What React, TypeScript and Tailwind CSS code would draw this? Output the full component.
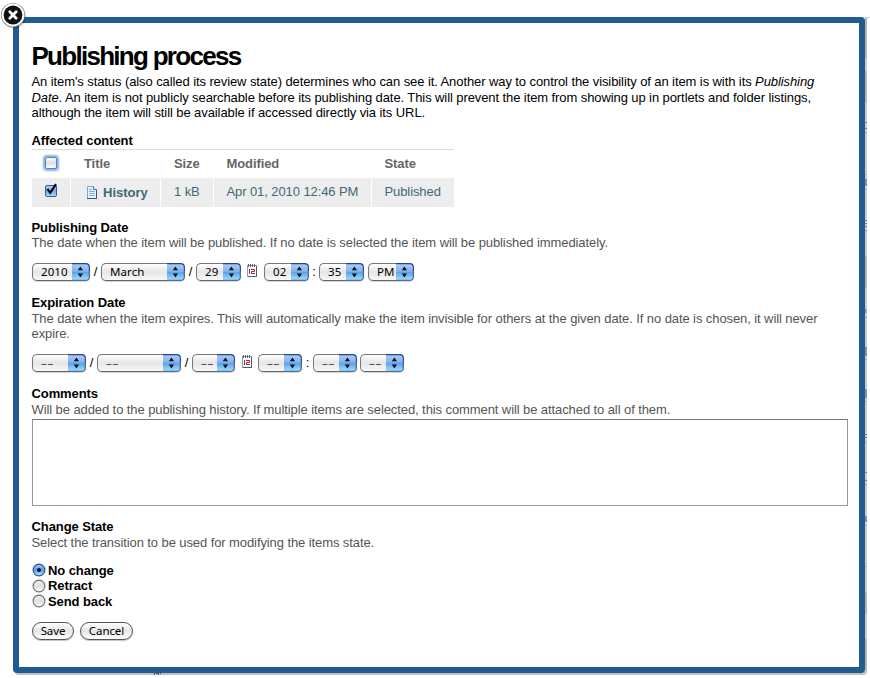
import React from "react";

const uiFont = "font-['Noto_Sans','Open_Sans',sans-serif]";

function Arrows({ uid }: { uid: string }) {
  return (
    <svg width="18" height="18" viewBox="0 0 18 18" className="block shrink-0">
      <defs>
        <linearGradient id={uid} x1="0" y1="0" x2="0" y2="1">
          <stop offset="0" stopColor="#b4cff0" />
          <stop offset="0.46" stopColor="#82b3ee" />
          <stop offset="0.52" stopColor="#60a2ea" />
          <stop offset="1" stopColor="#a9e6ff" />
        </linearGradient>
      </defs>
      <path d="M0 0H13.5Q18 0 18 4.5V13.5Q18 18 13.5 18H0Z" fill={`url(#${uid})`} />
      <path d="M0 .6H13.5Q17.4 .6 17.4 4.5V13.5" fill="none" stroke="#24429c" strokeWidth="1.1" />
      <path d="M17.4 8V13.5Q17.4 17.4 13.5 17.4H0" fill="none" stroke="#56718f" strokeWidth="1.1" />
      <path d="M5.8 7.3L8.4 3.4L11 7.3ZM5.8 10.6H11L8.4 14.5Z" fill="#08101c" />
    </svg>
  );
}

function Select({ id, label, className }: { id: string; label: string; className: string }) {
  return (
    <div className={`flex h-[18px] shrink-0 rounded-[5px] shadow-[0_1px_1px_rgba(0,0,0,0.18)] ${className}`}>
      <div
        className={`min-w-0 flex-1 rounded-l-[5px] border border-r-0 border-[#777] border-b-[#666] bg-linear-to-b from-[#fff] via-[#e6e6e6] to-[#f8f8f8] pl-[8px] text-[11.5px] leading-[15px] tracking-[0.1px] whitespace-nowrap text-black ${uiFont}`}
      >
        {label === "--" ? <span className="tracking-[0.7px] text-[#444]">––</span> : label}
      </div>
      <Arrows uid={id} />
    </div>
  );
}

function Calendar({ className }: { className: string }) {
  return (
    <svg width="10" height="13" viewBox="0 0 10 13" className={`shrink-0 self-start ${className}`}>
      <rect x="0.5" y="1.5" width="9" height="11" fill="#fff" stroke="#7fa3c8" />
      <path d="M9.5 2V12.5H1" fill="none" stroke="#3f6080" />
      <path d="M1.5 0V3M3.5 0V3M5.5 0V3M7.5 0V3" stroke="#444" strokeWidth="0.8" />
      <path d="M2.5 5V10M4 5.5H7.5V7.5H4.5V9.5H8" fill="none" stroke="#b8202c" />
    </svg>
  );
}

function Sep({ children, className }: { children: string; className: string }) {
  return <span className={`shrink-0 text-center leading-[17px] text-black ${className}`}>{children}</span>;
}

function Radio({ label, checked = false }: { label: string; checked?: boolean }) {
  const id = "radio" + label.replace(" ", "");
  return (
    <label className="flex h-[15.5px] items-center font-bold text-black">
      <svg width="14" height="14" viewBox="0 0 14 14" className="mr-[2px] shrink-0">
        <defs>
          <linearGradient id={id} x1="0" y1="0" x2="0" y2="1">
            <stop offset="0" stopColor={checked ? "#a8c9f3" : "#f2f2f2"} />
            <stop offset="0.5" stopColor={checked ? "#529ceb" : "#dedede"} />
            <stop offset="1" stopColor={checked ? "#b6f0ff" : "#ffffff"} />
          </linearGradient>
        </defs>
        <circle cx="7" cy="7" r="5.9" fill={`url(#${id})`} stroke={checked ? "#304f8a" : "#6e6e6e"} strokeWidth="1.1" />
        {checked && <circle cx="7" cy="7" r="2" fill="#07101f" />}
      </svg>
      {label}
    </label>
  );
}

function Button({ label, className }: { label: string; className: string }) {
  return (
    <button
      className={`h-[18px] rounded-[9px] border border-[#555] bg-linear-to-b from-white via-[#e6e6e6] to-white text-[11.5px] leading-[15px] text-black shadow-[0_1px_1px_rgba(0,0,0,0.25)] ${uiFont} ${className}`}
    >
      {label}
    </button>
  );
}

function Check({ checked = false }: { checked?: boolean }) {
  return checked ? (
    <svg width="16" height="16" viewBox="0 0 16 16">
      <defs>
        <linearGradient id="checkFill" x1="0" y1="0" x2="0" y2="1">
          <stop offset="0" stopColor="#b5d1f6" />
          <stop offset="0.5" stopColor="#69a9ef" />
          <stop offset="1" stopColor="#a9e5ff" />
        </linearGradient>
      </defs>
      <rect x="2.5" y="3.5" width="11" height="11" rx="1.5" fill="url(#checkFill)" stroke="#3b5a8c" />
      <path d="M4.5 7L7.2 10.8L13 2.2" fill="none" stroke="#000" strokeWidth="2.1" />
    </svg>
  ) : (
    <span className="block size-[12px] rounded-[2px] border border-[#5a83bb] bg-linear-to-b from-white via-[#dedede] to-white shadow-[0_0_2px_2px_#84b1e6]" />
  );
}

function DocIcon() {
  return (
    <svg width="12" height="13" viewBox="0 0 12 13" className="mr-[5px] shrink-0">
      <path d="M1.5 .5H7.5L10.5 3.5V12.5H1.5Z" fill="#e8f2fd" stroke="#7fa6d2" />
      <path d="M10.5 3.5V12.5H1" fill="none" stroke="#37536e" />
      <path d="M7.5 .5V3.5H10.5" fill="#fff" stroke="#4c6f98" />
      <path d="M3 3.5H6M3 5.5H9M3 7.5H9M3 9.5H9" stroke="#7fb0e6" />
    </svg>
  );
}

const heading = "h-[15.5px] font-bold text-black";

export default function App() {
  return (
    <div className="relative h-[678px] w-[870px] overflow-hidden bg-white font-['Liberation_Sans',Arial,sans-serif] text-[13px] leading-[15.5px] tracking-[-0.09px] text-[#555]">
      <div className="flex h-[675px] pt-[17px] pl-[13px]">
        <main className="z-1 h-[656px] w-[852px] shrink-0 rounded-[4px] border-6 border-[#205c90] bg-white pt-[18px] pl-[12.5px] shadow-[2px_2px_0_#c0bfc1]">
          <h1 className="h-[33px] text-[26px] leading-[30px] font-bold tracking-[-1.72px] whitespace-nowrap text-black">Publishing process</h1>
          <div className="h-[59px] whitespace-nowrap text-black">
            <p>An item's status (also called its review state) determines who can see it. Another way to control the visibility of an item is with its <i>Publishing</i></p>
            <p><i>Date</i>. An item is not publicly searchable before its publishing date. This will prevent the item from showing up in portlets and folder listings,</p>
            <p>although the item will still be available if accessed directly via its URL.</p>
          </div>
          <h2 className="h-[16px] font-bold text-black">Affected content</h2>
          <div className="grid w-[422.5px] grid-cols-[38px_89px_52px_157px_82px] gap-x-px border-t border-[#ddd] pl-[0.5px] leading-[28px]">
            <div className="flex h-[28px] items-start justify-center pt-[7px]"><Check /></div>
            <b className="pl-[13px] text-[#666]">Title</b>
            <b className="pl-[13px] text-[#666]">Size</b>
            <b className="pl-[12.5px] text-[#666]">Modified</b>
            <b className="pl-[12.5px] text-[#666]">State</b>
            <div className="flex h-[29px] justify-center bg-[#ededed] pt-[4px]"><Check checked /></div>
            <div className="flex items-center bg-[#ededed] pl-[15px] font-bold tracking-normal text-[#436976]"><DocIcon />History</div>
            <div className="bg-[#ededed] pl-[13px] text-[#436976]">1 kB</div>
            <div className="bg-[#ededed] pl-[12.5px] whitespace-nowrap text-[#436976]">Apr 01, 2010 12:46 PM</div>
            <div className="bg-[#ededed] pl-[12.5px] text-[#436976]">Published</div>
          </div>
          <section className="pt-[13px]">
            <h2 className="h-[15px] font-bold text-black">Publishing Date</h2>
            <p>The date when the item will be published. If no date is selected the item will be published immediately.</p>
            <div className="mt-[12.5px] flex h-[18px] pl-[0.5px]">
              <Select id="year1" label="2010" className="w-[58px]" />
              <Sep className="w-[11px]">/</Sep>
              <Select id="month1" label="March" className="w-[84px]" />
              <Sep className="w-[11px]">/</Sep>
              <Select id="day1" label="29" className="w-[45px]" />
              <Calendar className="mr-[7px] ml-[6px] mt-px" />
              <Select id="hour1" label="02" className="w-[45px]" />
              <Sep className="w-[10px]">:</Sep>
              <Select id="min1" label="35" className="w-[45px]" />
              <Select id="ampm1" label="PM" className="ml-[4px] w-[46px]" />
            </div>
          </section>
          <section className="pt-[14px]">
            <h2 className={heading}>Expiration Date</h2>
            <p className="whitespace-nowrap">The date when the item expires. This will automatically make the item invisible for others at the given date. If no date is chosen, it will never<br />expire.</p>
            <div className="mt-[12.5px] flex h-[18px] pl-[0.5px]">
              <Select id="year2" label="--" className="w-[54px]" />
              <Sep className="w-[11px]">/</Sep>
              <Select id="month2" label="--" className="w-[84px]" />
              <Sep className="w-[11px]">/</Sep>
              <Select id="day2" label="--" className="w-[43px]" />
              <Calendar className="mr-[6px] ml-[7px] mt-px" />
              <Select id="hour2" label="--" className="w-[44px]" />
              <Sep className="w-[11px]">:</Sep>
              <Select id="min2" label="--" className="w-[44px]" />
              <Select id="ampm2" label="--" className="ml-[3px] w-[44px]" />
            </div>
          </section>
          <section className="pt-[14px]">
            <h2 className={heading}>Comments</h2>
            <p>Will be added to the publishing history. If multiple items are selected, this comment will be attached to all of them.</p>
            <textarea aria-label="Comments" className="ml-[0.5px] mt-[2px] block h-[87px] w-[816px] resize-none border border-[#999] border-t-[#777] bg-white" />
          </section>
          <section className="pt-[13px]">
            <h2 className={heading}>Change State</h2>
            <p>Select the transition to be used for modifying the items state.</p>
            <div className="mt-[12.5px] pl-[0.5px]">
              <Radio label="No change" checked />
              <Radio label="Retract" />
              <Radio label="Send back" />
            </div>
            <div className="mt-[12.5px] flex gap-[6px] pl-[0.5px]">
              <Button label="Save" className="w-[42px]" />
              <Button label="Cancel" className="w-[53px]" />
            </div>
          </section>
        </main>
      </div>
      <svg width="28" height="30" viewBox="0 0 28 30" className="absolute top-0 left-0 z-2">
        <circle cx="14" cy="16.5" r="12" fill="#000" opacity="0.2" />
        <circle cx="13" cy="15" r="12" fill="#777" />
        <circle cx="13" cy="15" r="11.4" fill="#fff" />
        <circle cx="13" cy="15" r="9.4" fill="#111" />
        <path d="M9.8 11.8L16.2 18.2M16.2 11.8L9.8 18.2" stroke="#fff" strokeWidth="2.8" strokeLinecap="round" />
      </svg>
      <svg width="5" height="661" viewBox="0 0 5 661" className="absolute top-[17px] left-[865px] z-2">
        <path d="M0 .5H5" stroke="#d0d0d0" />
        <path d="M0 1H2V652H0Z" fill="#cbcbcd" />
        <path d="M0 1H2V41H0ZM0 54H2V86H0ZM0 239H2V271H0ZM0 575H2V597H0ZM0 622H2V652H0Z" fill="#b5b5b6" />
        <path d="M0 105.5H2M0 111.5H2M0 203.5H2M0 206.5H2M0 209.5H2M0 417.5H2M0 420.5H2M0 455.5H2M0 463.5H2" stroke="#5f87a9" />
        <path d="M0 162H2V169H0ZM0 292H1.5V296H0ZM0 330H2V339H0ZM0 372H2V381H0ZM0 499H2V505H0Z" fill="#7d96ab" />
        <path d="M0 115.5H2M0 157.5H2M0 172.5H2M0 213.5H2M0 300.5H2M0 342.5H2M0 384.5H2M0 425.5H2M0 467.5H2M0 508.5H2M0 549.5H2" stroke="#aaa" />
      </svg>
      <svg width="10" height="2" className="absolute top-[673px] left-[153px] z-2">
        <path d="M1.5 0V2M3 .5H5M5.5 0V2M7.5 0V1" stroke="#555" fill="none" />
      </svg>
    </div>
  );
}
